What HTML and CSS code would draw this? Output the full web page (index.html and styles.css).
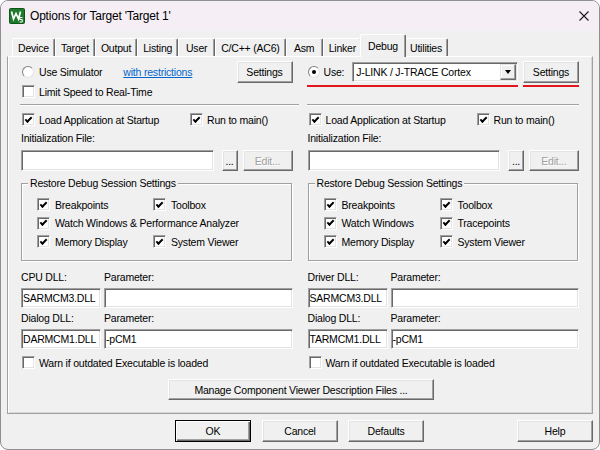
FILE: index.html
```html
<!DOCTYPE html>
<html lang="en">
<head>
  <meta charset="UTF-8">
  <title>Options for Target 'Target 1'</title>
  <link rel="stylesheet" href="styles.css">
</head>
<body>
  <div class="window">
    <div class="titlebar">
      <svg class="app-icon" width="16" height="16" viewBox="0 0 16 16">
        <rect x="0.5" y="0.5" width="15" height="15" rx="1" fill="#1f7a2b" stroke="#0e531b"/>
        <polyline points="2.5,3.5 4.5,11 7,5.5 9.5,11 11.5,3.5" fill="none" stroke="#fff" stroke-width="1.7"/>
        <path d="M10.5 9.5 h3 M10.8 9.5 v2 h2.4 v2.5 h-2.6" fill="none" stroke="#fff" stroke-width="1"/>
      </svg>
      <span class="title">Options for Target 'Target 1'</span>
      <svg class="close" width="10" height="10" viewBox="0 0 10 10">
        <path d="M0.5 0.5 L9.5 9.5 M9.5 0.5 L0.5 9.5" stroke="#1b1b1b" stroke-width="1.1"/>
      </svg>
    </div>

    <div class="content">
      <div class="tabs">
        <div class="tab">Device</div>
        <div class="tab">Target</div>
        <div class="tab">Output</div>
        <div class="tab">Listing</div>
        <div class="tab">User</div>
        <div class="tab">C/C++ (AC6)</div>
        <div class="tab">Asm</div>
        <div class="tab">Linker</div>
        <div class="tab active">Debug</div>
        <div class="tab">Utilities</div>
      </div>

      <div class="page">
        <div class="cols">
          <!-- simulator side -->
          <div class="col">
            <div class="top">
              <div class="row1">
                <span class="radio"></span>
                <span class="lbl">Use Simulator</span>
                <span class="link">with restrictions</span>
                <button class="btn settings">Settings</button>
              </div>
              <div class="chk-line limit"><span class="cb"></span>Limit Speed to Real-Time</div>
            </div>
            <div class="sep wide"></div>
            <div class="pair">
              <div class="chk-line"><span class="cb on"></span>Load Application at Startup</div>
              <div class="chk-line"><span class="cb on"></span>Run to main()</div>
            </div>
            <div class="label init">Initialization File:</div>
            <div class="file-row">
              <div class="field"></div>
              <button class="btn dots">...</button>
              <button class="btn edit" disabled>Edit...</button>
            </div>
            <fieldset class="group">
              <legend>Restore Debug Session Settings</legend>
              <div class="opts">
                <div class="chk-line"><span class="cb on"></span>Breakpoints</div>
                <div class="chk-line"><span class="cb on"></span>Toolbox</div>
                <div class="chk-line span2"><span class="cb on"></span>Watch Windows &amp; Performance Analyzer</div>
                <div class="chk-line"><span class="cb on"></span>Memory Display</div>
                <div class="chk-line"><span class="cb on"></span>System Viewer</div>
              </div>
            </fieldset>
            <div class="dll">
              <div class="label">CPU DLL:</div>
              <div class="label">Parameter:</div>
              <div class="field">SARMCM3.DLL</div>
              <div class="field"></div>
              <div class="label">Dialog DLL:</div>
              <div class="label">Parameter:</div>
              <div class="field">DARMCM1.DLL</div>
              <div class="field">-pCM1</div>
            </div>
            <div class="chk-line warn"><span class="cb"></span>Warn if outdated Executable is loaded</div>
          </div>

          <!-- target side -->
          <div class="col">
            <div class="top">
              <div class="row1">
                <span class="radio on"></span>
                <span class="lbl">Use:</span>
                <div class="select">
                  <span>J-LINK / J-TRACE Cortex</span>
                  <span class="drop"></span>
                </div>
                <button class="btn settings">Settings</button>
              </div>
              <div class="marks">
                <span class="mark m1"></span>
                <span class="mark m2"></span>
              </div>
            </div>
            <div class="sep"></div>
            <div class="pair">
              <div class="chk-line"><span class="cb on"></span>Load Application at Startup</div>
              <div class="chk-line"><span class="cb on"></span>Run to main()</div>
            </div>
            <div class="label init">Initialization File:</div>
            <div class="file-row">
              <div class="field"></div>
              <button class="btn dots">...</button>
              <button class="btn edit" disabled>Edit...</button>
            </div>
            <fieldset class="group">
              <legend>Restore Debug Session Settings</legend>
              <div class="opts">
                <div class="chk-line"><span class="cb on"></span>Breakpoints</div>
                <div class="chk-line"><span class="cb on"></span>Toolbox</div>
                <div class="chk-line"><span class="cb on"></span>Watch Windows</div>
                <div class="chk-line"><span class="cb on"></span>Tracepoints</div>
                <div class="chk-line"><span class="cb on"></span>Memory Display</div>
                <div class="chk-line"><span class="cb on"></span>System Viewer</div>
              </div>
            </fieldset>
            <div class="dll">
              <div class="label">Driver DLL:</div>
              <div class="label">Parameter:</div>
              <div class="field">SARMCM3.DLL</div>
              <div class="field"></div>
              <div class="label">Dialog DLL:</div>
              <div class="label">Parameter:</div>
              <div class="field">TARMCM1.DLL</div>
              <div class="field">-pCM1</div>
            </div>
            <div class="chk-line warn"><span class="cb"></span>Warn if outdated Executable is loaded</div>
          </div>
        </div>

        <div class="manage-row">
          <button class="btn manage">Manage Component Viewer Description Files ...</button>
        </div>
      </div>

      <div class="footer">
        <button class="btn default">OK</button>
        <button class="btn cancel">Cancel</button>
        <button class="btn">Defaults</button>
        <button class="btn help">Help</button>
      </div>
    </div>
  </div>
</body>
</html>
```

FILE: styles.css
```css
body {
  margin: 0;
  background: #fff;
  font-family: "Liberation Sans", Arial, sans-serif;
  font-size: 10.5px;
  letter-spacing: -0.2px;
  color: #000;
}
.window {
  width: 600px;
  height: 450px;
  box-sizing: border-box;
  border: 1px solid #8f8f8f;
  border-radius: 8px;
  background: #f0f0f0;
  overflow: hidden;
  display: flex;
  flex-direction: column;
}

/* title bar */
.titlebar {
  height: 30px;
  flex: none;
  display: flex;
  align-items: center;
  padding-left: 8px;
  background: #f5eef5;
}
.app-icon { flex: none; }
.title {
  margin-left: 5px;
  font-size: 12px;
}
.close {
  margin-left: auto;
  margin-right: 10px;
}

.content {
  flex: 1;
  display: flex;
  flex-direction: column;
  padding: 3px 6px 0 6px;
}

/* tabs */
.tabs {
  display: flex;
  align-items: flex-end;
  height: 22px;
  padding-left: 5px;
}
.tab {
  box-sizing: border-box;
  height: 18px;
  min-width: 37px;
  padding: 0 5px;
  display: flex;
  align-items: center;
  justify-content: center;
  border: 1px solid #fff;
  border-right-color: #696969;
  border-bottom: none;
  border-radius: 2px 2px 0 0;
  box-shadow: inset -1px 0 #a0a0a0;
  white-space: nowrap;
}
.tab.active {
  position: relative;
  z-index: 1;
  height: 23px;
  margin: 0 -2px -1px -2px;
  padding: 0 7px 1px 7px;
  background: #f0f0f0;
}

/* tab page */
.page {
  flex: none;
  height: 358px;
  box-sizing: border-box;
  border: 1px solid #a0a0a0;
  border-top-color: #fff;
  box-shadow: inset 1px 0 #fff, inset -1px -1px #d8d8d8;
  padding: 4px 13px 0 12px;
}
.cols {
  display: grid;
  grid-template-columns: 1fr 1fr;
  column-gap: 14px;
}
.col {
  display: flex;
  flex-direction: column;
  min-width: 0;
}
.top { height: 43px; }
.row1 {
  display: flex;
  align-items: center;
  height: 22px;
}
.row1 .radio { margin-left: 2px; }
.row1 .lbl { margin-left: 5px; }
.col + .col .row1 .radio { margin-left: 1px; }
.col + .col .row1 .lbl { margin-left: 4px; }
.link {
  margin-left: 21px;
  color: #0066cc;
  text-decoration: underline;
}

.marks {
  display: flex;
  margin-top: 2px;
}
.mark {
  height: 2px;
  background: #e3161d;
}
.m1 { width: 211px; }
.m2 { width: 56px; margin-left: auto; }

.sep {
  border-top: 1px solid #a0a0a0;
  border-bottom: 1px solid #fff;
}
.sep.wide { margin-right: -6px; }

.chk-line {
  display: flex;
  align-items: center;
  gap: 4px;
  height: 13px;
  white-space: nowrap;
}
.limit { margin-top: 2px; padding-left: 2px; }
.pair {
  display: grid;
  grid-template-columns: 168px auto;
  margin-top: 7px;
  padding-left: 2px;
}
.label {
  height: 13px;
  line-height: 13px;
  white-space: nowrap;
}
.init {
  margin-top: 6px;
  padding-left: 1px;
}

/* controls */
.cb {
  flex: none;
  box-sizing: border-box;
  width: 13px;
  height: 13px;
  background: #fff;
  border: 1px solid;
  border-color: #a0a0a0 #fff #fff #a0a0a0;
  box-shadow: inset 1px 1px #696969, inset -1px -1px #e3e3e3;
  display: flex;
  align-items: center;
  justify-content: center;
}
.cb.on::after {
  content: '';
  width: 5px;
  height: 2px;
  border-left: 2px solid #000;
  border-bottom: 2px solid #000;
  transform: rotate(-45deg);
  margin-top: -2px;
}
.radio {
  flex: none;
  box-sizing: border-box;
  width: 12px;
  height: 12px;
  border-radius: 50%;
  background: #fff;
  border: 1px solid;
  border-color: #808080 #e3e3e3 #e3e3e3 #808080;
  display: flex;
  align-items: center;
  justify-content: center;
}
.radio.on::after {
  content: '';
  width: 4px;
  height: 4px;
  border-radius: 50%;
  background: #000;
}

.btn {
  font: inherit;
  letter-spacing: inherit;
  color: #000;
  box-sizing: border-box;
  padding: 0;
  background: #f0f0f0;
  border: 1px solid;
  border-color: #fff #696969 #696969 #fff;
  box-shadow: inset -1px -1px #a0a0a0, inset 1px 1px #e3e3e3;
  display: flex;
  align-items: center;
  justify-content: center;
  white-space: nowrap;
}
.settings {
  width: 56px;
  height: 22px;
  margin-left: auto;
}
.btn.default {
  border-color: #000;
  box-shadow: inset 1px 1px #fff, inset -1px -1px #696969, inset -2px -2px #a0a0a0;
}

.field {
  box-sizing: border-box;
  height: 20px;
  background: #fff;
  border: 1px solid;
  border-color: #a0a0a0 #fff #fff #a0a0a0;
  box-shadow: inset 1px 1px #696969, inset -1px -1px #e3e3e3;
  padding-left: 1px;
  display: flex;
  align-items: center;
  white-space: nowrap;
  overflow: hidden;
}

.select {
  box-sizing: border-box;
  width: 166px;
  height: 20px;
  margin-left: 8px;
  background: #fff;
  border: 1px solid;
  border-color: #a0a0a0 #fff #fff #a0a0a0;
  box-shadow: inset 1px 1px #696969, inset -1px -1px #e3e3e3;
  display: flex;
  align-items: center;
  padding-left: 3px;
  white-space: nowrap;
}
.drop {
  box-sizing: border-box;
  width: 16px;
  height: 16px;
  margin-left: auto;
  margin-right: 1px;
  background: #f0f0f0;
  border: 1px solid;
  border-color: #e3e3e3 #696969 #696969 #e3e3e3;
  box-shadow: inset -1px -1px #a0a0a0, inset 1px 1px #fff;
  display: flex;
  align-items: center;
  justify-content: center;
}
.drop::after {
  content: '';
  border-left: 3.5px solid transparent;
  border-right: 3.5px solid transparent;
  border-top: 4px solid #000;
}

.file-row {
  display: flex;
  height: 21px;
  margin-top: 5px;
}
.file-row .field {
  flex: 1;
  height: 21px;
  margin-left: 1px;
}
.dots {
  width: 16px;
  margin-left: 8px;
  align-items: flex-end;
  padding-bottom: 3px;
}
.edit {
  width: 50px;
  margin-left: 5px;
  color: #a0a0a0;
  text-shadow: 1px 1px #fff;
}

/* restore group */
.group {
  margin: 6px 1px 0 1px;
  padding: 8px 0 12px 6px;
  border: 1px solid #a0a0a0;
  box-shadow: inset 1px 1px #fff, 1px 1px #fff;
  min-width: 0;
}
.group legend {
  padding: 0 2px;
  line-height: 13px;
  background: #f0f0f0;
}
.opts {
  display: grid;
  grid-template-columns: 116px auto;
  row-gap: 5.5px;
  padding-left: 9px;
}
.opts .chk-line { gap: 5px; }
.opts .span2 { grid-column: span 2; }

/* dll fields */
.dll {
  display: grid;
  grid-template-columns: 80px 1fr;
  column-gap: 3px;
  row-gap: 4px;
  margin: 10px 0 0 1px;
}
.warn {
  margin-top: 7px;
  padding-left: 2px;
}

.manage-row {
  display: flex;
  justify-content: center;
  margin-top: 10px;
}
.manage {
  width: 266px;
  height: 21px;
  margin-left: 3px;
}

/* dialog buttons */
.footer {
  display: flex;
  margin-top: 6px;
  padding-left: 168px;
}
.footer .btn {
  width: 76px;
  height: 22px;
}
.footer .cancel { margin-left: 11px; }
.footer .cancel + .btn { margin-left: 10px; }
.footer .help { margin-left: auto; }
```
